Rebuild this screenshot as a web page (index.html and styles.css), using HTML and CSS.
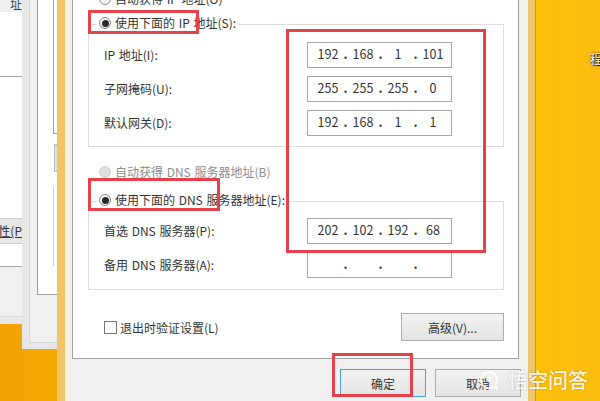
FILE: index.html
```html
<!DOCTYPE html>
<html lang="zh-CN">
<head>
<meta charset="utf-8">
<title>Internet 协议版本 4 属性</title>
<link rel="stylesheet" href="styles.css">
</head>
<body>
<main class="screen">
  <section class="win win-back">
    <div class="back-top">址</div>
    <div class="back-list"></div>
    <div class="back-mid"></div>
    <div class="back-btn">性(P</div>
    <div class="back-foot"></div>
  </section>
  <section class="win win-mid">
    <div class="mid-panel">
      <div class="mid-line"></div>
      <div class="mid-btn"></div>
      <div class="mid-line2"></div>
    </div>
  </section>
  <div class="glass glass-left"></div>
  <div class="glass glass-right"></div>

  <section class="dialog">
    <div class="body">
      <label class="radio-row first"><span class="radio"></span>自动获得 IP 地址(O)</label>
      <label class="radio-row legend"><span class="radio on"></span>使用下面的 IP 地址(S):</label>
      <div class="group">
        <div class="field"><span class="name">IP 地址(I):</span>
          <div class="ip"><span>192</span><i>.</i><span>168</span><i>.</i><span>1</span><i>.</i><span>101</span></div></div>
        <div class="field"><span class="name">子网掩码(U):</span>
          <div class="ip"><span>255</span><i>.</i><span>255</span><i>.</i><span>255</span><i>.</i><span>0</span></div></div>
        <div class="field"><span class="name">默认网关(D):</span>
          <div class="ip"><span>192</span><i>.</i><span>168</span><i>.</i><span>1</span><i>.</i><span>1</span></div></div>
      </div>
      <label class="radio-row disabled"><span class="radio off"></span>自动获得 DNS 服务器地址(B)</label>
      <label class="radio-row legend second"><span class="radio on"></span>使用下面的 DNS 服务器地址(E):</label>
      <div class="group dns">
        <div class="field"><span class="name">首选 DNS 服务器(P):</span>
          <div class="ip"><span>202</span><i>.</i><span>102</span><i>.</i><span>192</span><i>.</i><span>68</span></div></div>
        <div class="field"><span class="name">备用 DNS 服务器(A):</span>
          <div class="ip"><span></span><i>.</i><span></span><i>.</i><span></span><i>.</i><span></span></div></div>
      </div>
      <div class="options">
        <label class="check"><span class="box"></span>退出时验证设置(L)</label>
        <button class="btn adv">高级(V)...</button>
      </div>
    </div>
    <div class="footer">
      <button class="btn ok">确定</button>
      <button class="btn">取消</button>
    </div>
  </section>

  <div class="mark mark-red box-ip"></div>
  <div class="mark mark-red box-values"></div>
  <div class="mark mark-red box-dns"></div>
  <div class="mark mark-red box-ok"></div>

  <div class="desk-label">程</div>
  <div class="watermark">
    <svg class="wm-icon" width="21" height="20" viewBox="0 0 21 20" aria-hidden="true">
      <path d="M10 2a8 8 0 1 0 3.600 15.100L18 18.500l-1.400-4A8 8 0 0 0 10 2z" fill="none" stroke="#fff" stroke-width="1.800"/>
      <circle cx="10" cy="9" r="2.500" fill="#fff"/>
    </svg>
    <span>悟空问答</span>
  </div>
</main>
</body>
</html>
```
FILE: styles.css
```css
* { box-sizing: border-box; }
html, body { margin: 0; padding: 0; }
body { font-family: "Noto Sans CJK SC", "Noto Sans", sans-serif; font-size: 12px; color: #333; }

.screen {
  position: relative;
  width: 600px;
  height: 401px;
  overflow: hidden;
  background: linear-gradient(90deg, #f3a200 0, #f5a800 60px, #fdbf08 536px, #fcbc10 100%);
}

/* Windows stacked behind the dialog */
.win { position: absolute; top: 0; background: #f0f0f0; }
.win-back { left: 0; width: 22px; height: 324px; display: flex; flex-direction: column; background: #e9e9e9; }
.back-top { height: 12px; background: #efefef; font-size: 12px; line-height: 8px; text-align: right; overflow: hidden; color: #444; }
.back-list { height: 65px; background: #fff; border-bottom: 1px solid #a5a5a5; }
.back-mid { height: 141px; background: #fff; }
.back-btn {
  height: 26px; background: #e6e6e6; border-bottom: 1px solid #cfcfcf; border-top: 1px solid #cfcfcf;
  font-size: 12px; line-height: 24px; white-space: nowrap; text-decoration: underline; text-decoration-thickness: 1px;
  direction: rtl; overflow: hidden; color: #333;
}
.back-foot { height: 23px; background: #fff; border-bottom: 1px solid #a5a5a5; }
.back-foot::after { content: ""; display: block; height: 49px; margin-top: 23px; background: #f0f0f0; border-bottom: 1px solid #dcdcdc; }

.win-mid {
  left: 22px; width: 36px; height: 349px; padding: 0 0 6px 7px;
  background: #f0f0f0; border-left: 0;
  box-shadow: inset 7px 0 0 #e7e7e7, inset 0 -6px 0 #e7e7e7;
}
.mid-panel {
  height: 343px; padding: 0 0 50px 8px;
  border-left: 1px solid #d8d8d8; border-bottom: 1px solid #d8d8d8;
}
.mid-panel::before {
  content: ""; position: absolute; left: 15px; top: 0; width: 21px; height: 294px;
  background: #fff; border-left: 1px solid #a0a0a0; border-bottom: 1px solid #a0a0a0;
}
.mid-line { position: absolute; left: 31px; top: 0; width: 5px; height: 134px; border-left: 1px solid #a0a0a0; border-bottom: 1px solid #a0a0a0; }
.mid-btn { position: absolute; left: 32px; top: 144px; width: 4px; height: 28px; background: #e2e2e2; border: 1px solid #bdbdbd; border-right: 0; }
.mid-line2 { position: absolute; left: 31px; top: 187px; width: 1px; height: 79px; background: #cfd3da; }

.glass { position: absolute; top: 0; height: 401px; }
.glass-left { left: 57px; width: 15px; background: linear-gradient(90deg, #f0c668 0, #f0c668 8px, #f4efe3 8px, #f4f0e6 100%); }
.glass-right { left: 528px; width: 8px; background: #efc56c; border-right: 1px solid #c99a36; }

/* Dialog */
.dialog { position: absolute; left: 72px; top: 0; width: 456px; height: 401px; background: #f0f0f0; }
.body {
  width: 447px; height: 359px; padding: 0 14px 0 15px; overflow: hidden;
  background: #fff; border: 1px solid #a0a0a0; border-top: 0;
  display: flex; flex-direction: column;
}
.radio-row { position: relative; z-index: 1; display: flex; align-items: center; gap: 4px; height: 20px; white-space: nowrap; line-height: 20px; word-spacing: 1px; }
.radio-row.first { margin-top: -11px; margin-left: 11px; }
.radio-row.legend { margin-top: 4px; margin-left: 9px; padding: 0 2px; width: fit-content; background: #fff; }
.radio-row.disabled { margin-top: 15px; margin-left: 11px; color: #8d8d8d; }
.radio-row.second { margin-top: 8px; }
.radio {
  width: 12px; height: 12px; flex: none; border-radius: 50%;
  border: 1px solid #8a8a8a; background: #f4f4f4;
  display: flex; align-items: center; justify-content: center;
}
.radio.on::after { content: ""; width: 7px; height: 7px; border-radius: 50%; background: #2a2a2a; }
.radio.off { border-color: #cfcfcf; background: #dedede; }

.group {
  margin-top: -9px; height: 123px; padding: 17px 51px 0 15px;
  border: 1px solid #dedede; display: flex; flex-direction: column; gap: 8px;
}
.group.dns { height: 89px; padding-top: 16px; }
.field { display: flex; justify-content: space-between; align-items: center; height: 26px; }
.name { white-space: nowrap; position: relative; top: -1px; word-spacing: 1px; }
.ip {
  width: 145px; height: 26px; padding: 0 0 3px 6px; display: flex; align-items: center;
  border: 1px solid #a8a8a8; background: #fff; font-size: 12.500px;
}
.ip span { width: 28px; text-align: center; }
.ip i { width: 7px; text-align: center; font-style: normal; font-weight: 700; }

.options { margin-top: 23px; padding-left: 16px; height: 28px; display: flex; justify-content: space-between; align-items: center; }
.check { display: flex; align-items: center; gap: 3px; }
.box { width: 13px; height: 13px; border: 1px solid #777; background: #fff; }

.btn {
  height: 28px; width: 86px; padding: 0; font: inherit; color: #333;
  border: 1px solid #adadad; background: linear-gradient(#f2f2f2, #e4e4e4);
}
.adv { width: 103px; }
.ok { border-color: #4aa0e6; }
.footer { display: flex; justify-content: flex-end; gap: 9px; padding: 10px 7px 0 0; }

/* Red annotation frames */
.mark-red { position: absolute; z-index: 3; border: 3px solid #e7414b; }
.box-ip { left: 88px; top: 10px; width: 111px; height: 24px; }
.box-values { left: 286px; top: 29px; width: 200px; height: 224px; }
.box-dns { left: 88px; top: 178px; width: 132px; height: 33px; }
.box-ok { left: 332px; top: 353px; width: 81px; height: 44px; }

/* Desktop label + watermark */
.desk-label {
  position: absolute; z-index: 2; left: 590px; top: 50px; font-size: 12px; line-height: 18px; color: #fff;
  text-shadow: 1px 1px 1px #000, 0 0 2px #000;
}
.watermark {
  position: absolute; z-index: 4; left: 479px; top: 366px; display: flex; align-items: center; gap: 8px;
  color: rgba(255, 255, 255, .92); font-size: 20px; font-weight: 500; line-height: 28px; white-space: nowrap;
  text-shadow: 0 0 2px rgba(0, 0, 0, .25);
}
.wm-icon { flex: none; opacity: .9; }
```
